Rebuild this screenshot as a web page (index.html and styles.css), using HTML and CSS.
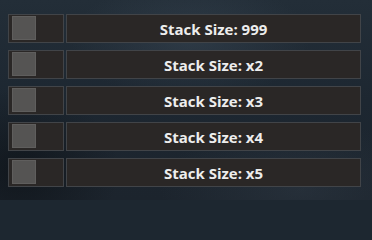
FILE: index.html
```html
<!DOCTYPE html>
<html>
<head>
<meta charset="utf-8">
<link rel="stylesheet" href="styles.css">
</head>
<body>
<div class="list">
  <div class="row">
    <div class="slot"><div class="swatch"></div></div>
    <div class="label">Stack Size: 999</div>
  </div>
  <div class="row">
    <div class="slot"><div class="swatch"></div></div>
    <div class="label">Stack Size: x2</div>
  </div>
  <div class="row">
    <div class="slot"><div class="swatch"></div></div>
    <div class="label">Stack Size: x3</div>
  </div>
  <div class="row">
    <div class="slot"><div class="swatch"></div></div>
    <div class="label">Stack Size: x4</div>
  </div>
  <div class="row">
    <div class="slot"><div class="swatch"></div></div>
    <div class="label">Stack Size: x5</div>
  </div>
</div>
</body>
</html>
```
FILE: styles.css
```css
html {
  background: #1d2730;
}
html, body {
  margin: 0;
  padding: 0;
  width: 372px;
  height: 200px;
  overflow: hidden;
}
body {
  background:
    radial-gradient(ellipse 120px 60px at 190px 40px, rgba(70,85,100,0.35), transparent),
    radial-gradient(ellipse 100px 80px at 20px 170px, rgba(10,14,18,0.6), transparent),
    radial-gradient(ellipse 140px 70px at 300px 190px, rgba(60,72,84,0.3), transparent),
    linear-gradient(180deg, #232e38 0%, #1d2731 50%, #1c242d 100%);
  font-family: "Open Sans", "Noto Sans", sans-serif;
}
.list {
  display: flex;
  flex-direction: column;
  gap: 7px;
  padding: 14px 0 0 8px;
}
.row {
  display: flex;
  gap: 2px;
  height: 29px;
}
.slot {
  box-sizing: border-box;
  width: 56px;
  height: 29px;
  background: #2a2726;
  border: 1px solid #414448;
  padding: 1px 0 0 3px;
}
.swatch {
  box-sizing: border-box;
  width: 24px;
  height: 24px;
  background: #555453;
  border: 1px solid #5f5e5d;
}
.label {
  box-sizing: border-box;
  width: 295px;
  height: 29px;
  background: #2a2726;
  border: 1px solid #414448;
  color: #ededed;
  font-weight: 700;
  font-size: 15px;
  display: flex;
  align-items: center;
  justify-content: center;
}
```
